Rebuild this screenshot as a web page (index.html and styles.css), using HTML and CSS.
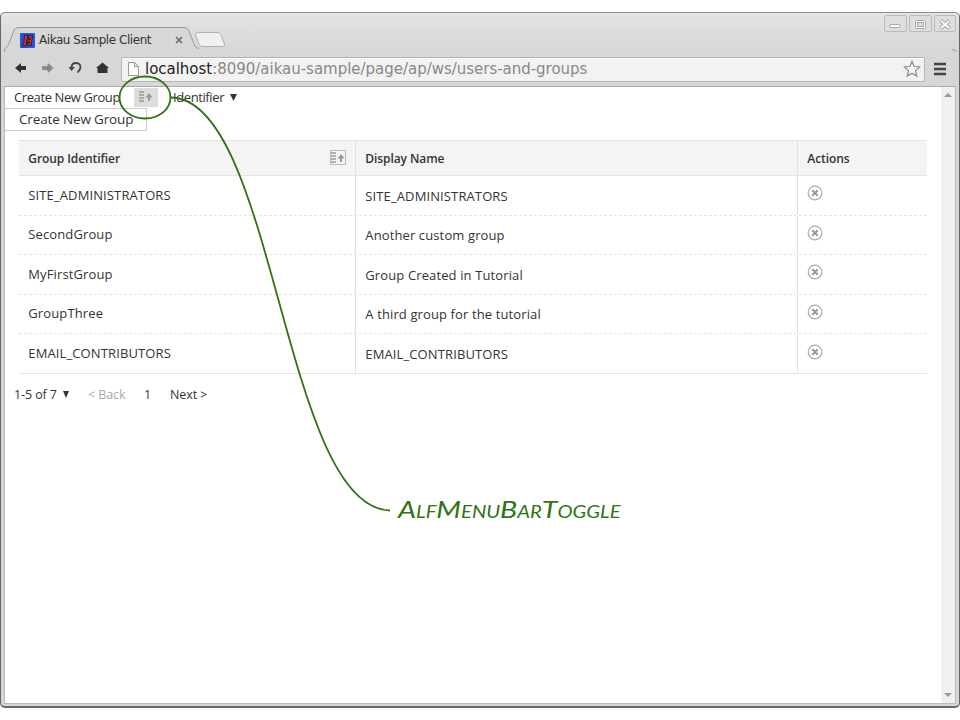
FILE: index.html
```html
<!DOCTYPE html>
<html lang="en">
<head>
<meta charset="utf-8">
<title>Aikau Sample Client</title>
<link rel="stylesheet" href="styles.css">
</head>
<body>
<svg class="defs" width="0" height="0">
  <symbol id="sort" viewBox="0 0 16 16"><path d="M1 3h5M1 6h5M1 9h5M1 12h5" stroke="#999" stroke-width="1.6"/><path d="M11 12V6" stroke="#999" stroke-width="2"/><path d="M7.500 8.500L11 4l3.500 4.500z" fill="#999"/></symbol>
  <symbol id="remove" viewBox="0 0 16 16"><circle cx="8" cy="8" r="6.8" fill="#fff" stroke="#aaa" stroke-width="1.2"/><path d="M5.3 5.3l5.4 5.4M10.7 5.3l-5.4 5.4" stroke="#999" stroke-width="2"/></symbol>
</svg>
<div class="window">
  <div class="controls">
    <span class="control c1"><svg width="22" height="16"><rect x="4.5" y="8.5" width="11" height="3" rx="1.5" fill="#fff" stroke="#aaa"/></svg></span>
    <span class="control c2"><svg width="22" height="16"><rect x="5.5" y="4.5" width="10" height="8" rx="1" fill="#f8f8f8" stroke="#aaa"/><rect x="7.5" y="6.5" width="6" height="4" fill="#ddd" stroke="#aaa"/></svg></span>
    <span class="control c3"><svg width="21" height="16"><path d="M5.500 4.500l9 8M14.500 4.500l-9 8" stroke="#aaa" stroke-width="4"/><path d="M6 5l8 7M14 5l-8 7" stroke="#fafafa" stroke-width="2"/></svg></span>
  </div>
  <div class="tabs">
    <svg class="tabshape" width="960" height="26"><path d="M4.500 26V24Q5 22 7 21Q8.500 19 9.500 16L14 4Q15.500 1.500 18 1.500H184Q187 1.500 188.500 4L195 20Q196 23 199 23.500H953Q956 24 956.500 26V30H4.500Z" fill="#d7d7d7"/><path d="M4.500 26V24Q5 22 7 21Q8.500 19 9.500 16L14 4Q15.500 1.500 18 1.500H184Q187 1.500 188.500 4L195 20Q196 22 199 22.500" fill="none" stroke="#999"/><path d="M952 23.500Q956 23.500 956.500 26" fill="none" stroke="#999"/><path d="M198 6.500H218Q220 6.500 221 9L224.500 18Q225 20.500 222.500 20.500H203Q200 20.500 199 18L195.500 9Q195 6.500 198 6.500Z" fill="#f0f0f0" stroke="#b0b0b0"/></svg>
    <svg class="favicon" width="15" height="15"><rect width="15" height="15" rx="1" fill="#2454e0"/><path d="M4.500 2h3L6 13H2.500l.3-2.500h1zM8.500 2.500h4l-.5 4-1 1 .8 1-.5 4H7.500z" fill="#e8301c" stroke="#151520" stroke-width=".8"/><path d="M10 4.500L9.600 7M9.400 8.500L9 11" stroke="#111" stroke-width="1.2"/></svg>
    <span class="tabtitle">Aikau Sample Client</span>
    <svg class="tabclose" width="8" height="8"><path d="M1 1l6 6M7 1L1 7" stroke="#666" stroke-width="1.600"/></svg>
  </div>
  <div class="toolbar">
    <svg class="navicons" width="112" height="34" viewBox="0 0 112 34"><path d="M7 16l6-5v3h5v4h-5v3z" fill="#333"/><path d="M46 16l-6-5v3h-6v4h6v3z" fill="#999"/><path d="M35 15h8M35 17h8M40 12v8M42 14v5" stroke="#666" stroke-dasharray="1 1"/><path d="M63.500 16C63.500 9 72.500 10 72.500 15Q72.500 18 69.500 20.500" fill="none" stroke="#444" stroke-width="1.800"/><path d="M60.500 15h6.500l-3.500 4z" fill="#444"/><path d="M88 16l6.500-5.500 6.500 5.500h-1.500v5H89.500v-5z" fill="#333"/></svg>
    <div class="address">
      <svg width="13" height="16"><path d="M1.500 1.500h6l4 4v9h-10zM7.500 1.500v4h4" fill="#fff" stroke="#999"/></svg>
      <span class="url"><b>localhost</b>:8090/aikau-sample/page/ap/ws/users-and-groups</span>
      <svg class="star" width="18" height="18"><path d="M9 1.300l2.100 5.200 5.600.4-4.200 3.700 1.200 5.500L9 13.200l-4.700 2.900 1.200-5.500L1.300 6.900l5.600-.4z" fill="#fafafa" stroke="#888" stroke-width="1.200"/></svg>
    </div>
    <svg class="menu" width="12" height="14"><path d="M0 2h12M0 7h12M0 12h12" stroke="#444" stroke-width="2.400"/></svg>
  </div>
  <div class="viewport">
    <main class="page">
      <nav class="menubar">
        <span>Create New Group</span>
        <span class="toggle"><svg width="16" height="16"><use href="#sort"/></svg></span>
        <span class="ident">Identifier</span><svg class="caret" width="7" height="8"><path d="M0 0h7L3.500 7z" fill="#333"/></svg>
      </nav>
      <div class="popup">Create New Group</div>
      <div class="grid">
        <div class="row head"><div class="cell">Group Identifier<svg class="sorticon" width="16" height="16"><rect x=".5" y=".5" width="15" height="14" fill="#f5f5f5" stroke="#bbb"/><use href="#sort"/></svg></div><div class="cell">Display Name</div><div class="cell">Actions</div></div>
        <div class="row"><div class="cell">SITE_ADMINISTRATORS</div><div class="cell">SITE_ADMINISTRATORS</div><div class="cell"><svg width="16" height="16"><use href="#remove"/></svg></div></div>
        <div class="row"><div class="cell">SecondGroup</div><div class="cell">Another custom group</div><div class="cell"><svg width="16" height="16"><use href="#remove"/></svg></div></div>
        <div class="row"><div class="cell">MyFirstGroup</div><div class="cell">Group Created in Tutorial</div><div class="cell"><svg width="16" height="16"><use href="#remove"/></svg></div></div>
        <div class="row"><div class="cell">GroupThree</div><div class="cell">A third group for the tutorial</div><div class="cell"><svg width="16" height="16"><use href="#remove"/></svg></div></div>
        <div class="row"><div class="cell">EMAIL_CONTRIBUTORS</div><div class="cell">EMAIL_CONTRIBUTORS</div><div class="cell"><svg width="16" height="16"><use href="#remove"/></svg></div></div>
      </div>
      <div class="pager"><span class="range">1-5 of 7</span><svg class="caret" width="6" height="8"><path d="M0 0h6L3 7z" fill="#333"/></svg><span class="back">&lt; Back</span><span class="num">1</span><span>Next &gt;</span></div>
    </main>
    <div class="scrollbar"><svg width="8" height="5"><path d="M0 5l4-4 4 4z" fill="#999"/></svg><svg width="8" height="5"><path d="M0 0h8L4 4z" fill="#999"/></svg></div>
  </div>
</div>
<svg class="callout" width="960" height="720"><ellipse cx="145" cy="97.500" rx="25.500" ry="21" /><path d="M170.500 97.500C275 97.500 283 508 390 510.500"/></svg>
<div class="note">AlfMenuBarToggle</div>
</body>
</html>
```

FILE: styles.css
```css
* { box-sizing: border-box; }
body { margin: 0; padding-top: 12px; width: 960px; height: 720px; overflow: hidden; background: #fff; font-family: "Open Sans", sans-serif; color: #333; }
svg { flex: none; display: block; }
.defs { position: absolute; }
.window { width: 960px; height: 696px; border: 1px solid #666; border-top-color: #8c8c8c; border-bottom-width: 2px; border-radius: 5px; background: linear-gradient(#e4e4e4, #d6d6d6 40px); display: flex; flex-direction: column; overflow: hidden; }
.controls { height: 14px; display: flex; justify-content: flex-end; gap: 2px; padding: 2px 3px 0 0; }
.control { height: 17px; border: 1px solid #bbb; border-radius: 2px; background: #dedede; overflow: hidden; }
.c1, .c2 { width: 23px; }
.c3 { width: 22px; }
.tabs { height: 24px; position: relative; display: flex; align-items: center; padding: 2px 0 0 19px; }
.tabshape { position: absolute; left: -1px; top: -1px; }
.favicon, .tabtitle, .tabclose { position: relative; }
.tabtitle { margin-left: 4px; width: 136px; font: 12px "DejaVu Sans", sans-serif; letter-spacing: -0.450px; white-space: nowrap; }
.toolbar { height: 36px; flex: none; margin: 0 3px; padding: 1px 0 0 4px; background: #d7d7d7; display: flex; align-items: center; border-bottom: 1px solid #aaa; }
.navicons { margin-right: 1px; }
.address { width: 804px; height: 25px; border: 1px solid #b4b4b4; border-radius: 2px; background: #f2f2f2; display: flex; align-items: center; padding: 0 3px 0 5px; box-shadow: inset 0 1px #fff; }
.url { margin-left: 5px; font: 15px "DejaVu Sans", sans-serif; letter-spacing: -0.020px; color: #888; white-space: nowrap; }
.url b { font-weight: 400; color: #222; }
.star { margin-left: auto; }
.menu { margin-left: 9px; }
.viewport { flex: 1; min-height: 0; margin: 0 3px 2px 3px; border: 1px solid #bbb; border-top: 0; background: #fff; display: flex; }
.page { flex: 1; min-width: 0; }
.menubar { height: 21px; display: flex; align-items: center; padding: 0 0 1px 9px; font-size: 13px; letter-spacing: -0.400px; white-space: nowrap; }
.menubar > span:first-child { width: 120px; }
.toggle { width: 24px; height: 19px; background: #ddd; display: flex; align-items: center; justify-content: center; }
.ident { margin-left: 15px; width: 57px; }
.caret { margin-top: 2px; }
.popup { width: 142px; height: 23px; border: 1px solid #ccc; border-left: 0; padding-left: 14px; line-height: 20px; font-size: 13.500px; letter-spacing: -0.150px; white-space: nowrap; }
.grid { margin: 9px 0 0 14px; width: 908px; border-top: 1px solid #e4e4e4; border-bottom: 1px solid #e4e4e4; }
.row { display: grid; grid-template-columns: 336px 442px 130px; height: 39.500px; border-bottom: 1px dashed #e4e4e4; font-size: 13px; letter-spacing: .120px; }
.row:last-child { border-bottom: 0; height: 39px; }
.cell { display: flex; align-items: center; padding: 0 0 1px 9.300px; white-space: nowrap; }
.cell + .cell { border-left: 1px solid #e0e0e0; padding-top: 1px; padding-bottom: 0; }
.cell:last-child { padding-top: 0; padding-bottom: 4px; }
.head { height: 35px; background: #f4f4f4; border-bottom: 1px solid #e4e4e4; font-size: 12px; letter-spacing: -0.080px; font-weight: 600; }
.head .cell, .head .cell:last-child { padding-top: 0; padding-bottom: 0; }
.sorticon { margin-left: auto; margin-right: 9px; }
.pager { display: flex; align-items: center; height: 20px; margin-top: 10px; padding-left: 9px; font-size: 12.500px; letter-spacing: -0.100px; white-space: nowrap; }
.range { width: 49px; }
.back { margin-left: 19px; width: 56px; color: #aaa; }
.num { width: 26px; }
.scrollbar { width: 14px; background: #f0f0f0; display: flex; flex-direction: column; align-items: center; justify-content: space-between; padding: 5px 0; }
.callout { position: absolute; left: 0; top: 0; fill: none; stroke: #2f7414; stroke-width: 1.800; }
.note { position: absolute; left: 398px; top: 494px; font: italic small-caps 24px/30px Lato, sans-serif; color: #2f7414; transform: scaleX(1.190); transform-origin: left; white-space: nowrap; }
```
